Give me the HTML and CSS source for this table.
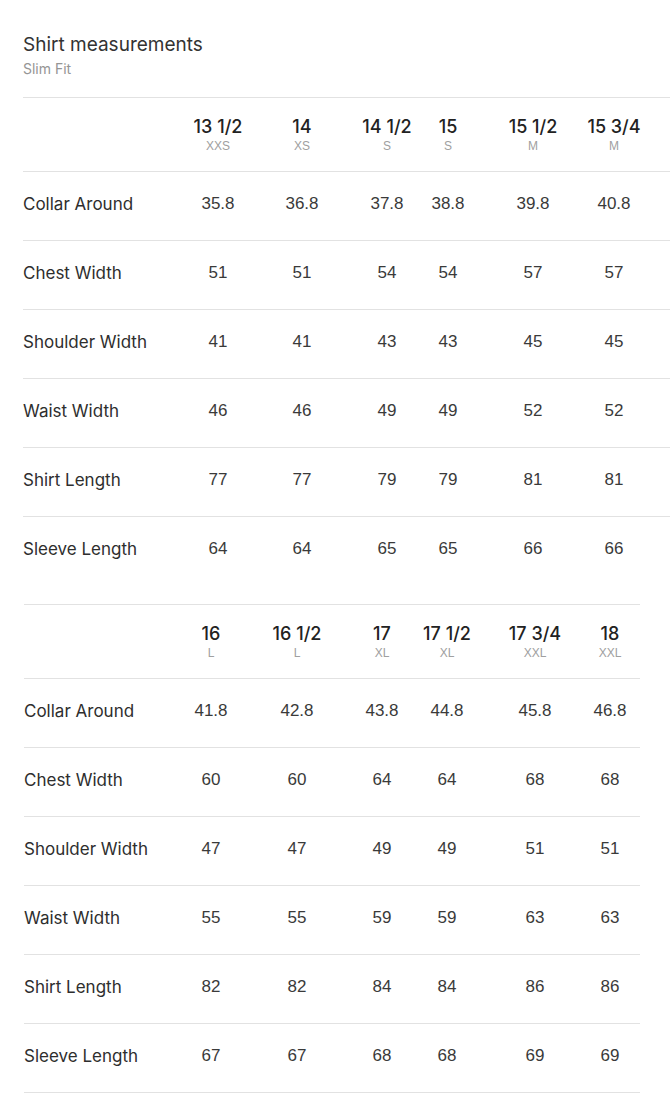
FILE: index.html
```html
<!DOCTYPE html>
<html>
<head>
<meta charset="utf-8">
<link rel="stylesheet" href="styles.css">
</head>
<body>
<div class="page">
  <h1 class="title">Shirt measurements</h1>
  <div class="subtitle">Slim Fit</div>

  <div class="table t1">
    <div class="row head">
      <div class="label"></div>
      <div class="cell"><div class="size">13 1/2</div><div class="alpha">XXS</div></div>
      <div class="cell"><div class="size">14</div><div class="alpha">XS</div></div>
      <div class="cell"><div class="size">14 1/2</div><div class="alpha">S</div></div>
      <div class="cell"><div class="size">15</div><div class="alpha">S</div></div>
      <div class="cell"><div class="size">15 1/2</div><div class="alpha">M</div></div>
      <div class="cell"><div class="size">15 3/4</div><div class="alpha">M</div></div>
    </div>
    <div class="row"><div class="label">Collar Around</div><div class="cell">35.8</div><div class="cell">36.8</div><div class="cell">37.8</div><div class="cell">38.8</div><div class="cell">39.8</div><div class="cell">40.8</div></div>
    <div class="row"><div class="label">Chest Width</div><div class="cell">51</div><div class="cell">51</div><div class="cell">54</div><div class="cell">54</div><div class="cell">57</div><div class="cell">57</div></div>
    <div class="row"><div class="label">Shoulder Width</div><div class="cell">41</div><div class="cell">41</div><div class="cell">43</div><div class="cell">43</div><div class="cell">45</div><div class="cell">45</div></div>
    <div class="row"><div class="label">Waist Width</div><div class="cell">46</div><div class="cell">46</div><div class="cell">49</div><div class="cell">49</div><div class="cell">52</div><div class="cell">52</div></div>
    <div class="row"><div class="label">Shirt Length</div><div class="cell">77</div><div class="cell">77</div><div class="cell">79</div><div class="cell">79</div><div class="cell">81</div><div class="cell">81</div></div>
    <div class="row last"><div class="label">Sleeve Length</div><div class="cell">64</div><div class="cell">64</div><div class="cell">65</div><div class="cell">65</div><div class="cell">66</div><div class="cell">66</div></div>
  </div>

  <div class="table t2">
    <div class="row head">
      <div class="label"></div>
      <div class="cell"><div class="size">16</div><div class="alpha">L</div></div>
      <div class="cell"><div class="size">16 1/2</div><div class="alpha">L</div></div>
      <div class="cell"><div class="size">17</div><div class="alpha">XL</div></div>
      <div class="cell"><div class="size">17 1/2</div><div class="alpha">XL</div></div>
      <div class="cell"><div class="size">17 3/4</div><div class="alpha">XXL</div></div>
      <div class="cell"><div class="size">18</div><div class="alpha">XXL</div></div>
    </div>
    <div class="row"><div class="label">Collar Around</div><div class="cell">41.8</div><div class="cell">42.8</div><div class="cell">43.8</div><div class="cell">44.8</div><div class="cell">45.8</div><div class="cell">46.8</div></div>
    <div class="row"><div class="label">Chest Width</div><div class="cell">60</div><div class="cell">60</div><div class="cell">64</div><div class="cell">64</div><div class="cell">68</div><div class="cell">68</div></div>
    <div class="row"><div class="label">Shoulder Width</div><div class="cell">47</div><div class="cell">47</div><div class="cell">49</div><div class="cell">49</div><div class="cell">51</div><div class="cell">51</div></div>
    <div class="row"><div class="label">Waist Width</div><div class="cell">55</div><div class="cell">55</div><div class="cell">59</div><div class="cell">59</div><div class="cell">63</div><div class="cell">63</div></div>
    <div class="row"><div class="label">Shirt Length</div><div class="cell">82</div><div class="cell">82</div><div class="cell">84</div><div class="cell">84</div><div class="cell">86</div><div class="cell">86</div></div>
    <div class="row"><div class="label">Sleeve Length</div><div class="cell">67</div><div class="cell">67</div><div class="cell">68</div><div class="cell">68</div><div class="cell">69</div><div class="cell">69</div></div>
  </div>
</div>
</body>
</html>
```

FILE: styles.css
```css
html, body {
  margin: 0;
  padding: 0;
  background: #ffffff;
}

body {
  font-family: "Inter", "Liberation Sans", Arial, sans-serif;
  color: #222222;
}

.page {
  padding: 33px 0 0 0;
}

.title {
  margin: 0 0 0 23px;
  font-size: 19px;
  line-height: 24px;
  font-weight: 400;
  color: #333333;
}

.subtitle {
  margin: 2px 0 0 23px;
  font-size: 14px;
  line-height: 20px;
  color: #959595;
}

.table {
  display: flex;
  flex-direction: column;
  border-top: 1px solid #e2e2e2;
}

.t1 {
  margin: 18px 0 0 23px;
  width: 647px;
}

.t2 {
  margin: 19px 0 0 24px;
  width: 616px;
}

.row {
  display: grid;
  align-items: center;
  box-sizing: content-box;
  height: 64px;
  padding-bottom: 4px;
  border-bottom: 1px solid #e2e2e2;
}

.row.head {
  height: 73px;
  padding-bottom: 0;
}

.row.last {
  border-bottom: none;
}

.t1 .row {
  grid-template-columns: 168px 54px 114px 56px 66px 104px 58px;
}

.t2 .row {
  grid-template-columns: 160px 54px 118px 52px 78px 98px 52px;
}

.label {
  font-size: 17px;
  line-height: 20px;
  color: #2e2e2e;
  white-space: nowrap;
}

.cell {
  text-align: center;
  font-family: "Liberation Sans", Arial, sans-serif;
  font-size: 17px;
  line-height: 20px;
  color: #3a3a3a;
  white-space: nowrap;
}

.size {
  font-family: "Inter", "Liberation Sans", Arial, sans-serif;
  font-size: 18px;
  line-height: 22px;
  font-weight: 500;
  color: #222222;
}

.alpha {
  font-family: "Liberation Sans", Arial, sans-serif;
  font-size: 12px;
  line-height: 14px;
  color: #a0a0a0;
  margin-top: 1px;
}
```
